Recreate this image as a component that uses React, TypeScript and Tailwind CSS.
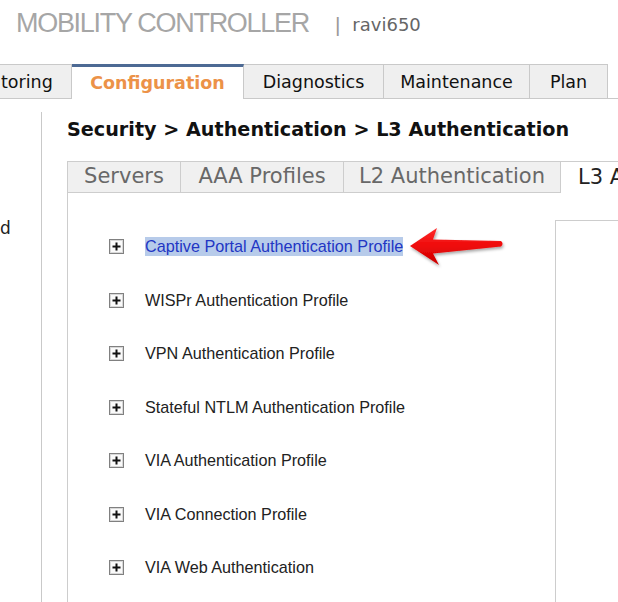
import React from "react";

function PlusIcon() {
  return (
    <svg width="15" height="15" viewBox="0 0 15 15" className="shrink-0">
      <rect x="0.5" y="0.5" width="14" height="14" fill="#f4f4f4" stroke="#808080" />
      <rect x="1.5" y="1.5" width="12" height="12" fill="#fafafa" stroke="#d8d8d8" />
      <rect x="3.5" y="6.5" width="8" height="2" fill="#111" />
      <rect x="6.5" y="3.5" width="2" height="8" fill="#111" />
    </svg>
  );
}

function Arrow() {
  return (
    <svg
      width="110"
      height="48"
      viewBox="0 0 110 48"
      className="absolute left-[403px] top-[223px]"
    >
      <defs>
        <linearGradient id="ag" x1="0" y1="0" x2="0" y2="1">
          <stop offset="0" stopColor="#ff2a2a" />
          <stop offset="0.5" stopColor="#ee0a0a" />
          <stop offset="1" stopColor="#c80000" />
        </linearGradient>
        <filter id="sh" x="-10%" y="-20%" width="130%" height="150%">
          <feDropShadow dx="1" dy="2" stdDeviation="1.4" floodColor="#000" floodOpacity="0.35" />
        </filter>
      </defs>
      <path
        d="M7 23 L34 5 L30 16.5 L98 18 Q101 20.5 98 23.5 L30 30.5 L36 42 Z"
        fill="url(#ag)"
        filter="url(#sh)"
      />
    </svg>
  );
}

const items = [
  "Captive Portal Authentication Profile",
  "WISPr Authentication Profile",
  "VPN Authentication Profile",
  "Stateful NTLM Authentication Profile",
  "VIA Authentication Profile",
  "VIA Connection Profile",
  "VIA Web Authentication",
];

export default function App() {
  return (
    <div className="relative w-[618px] h-[602px] overflow-hidden bg-white font-['DejaVu_Sans',sans-serif]">
      {/* Header */}
      <div className="h-[64px] flex items-start pl-[16px] pt-[10px]">
        <span className="font-['Liberation_Sans',sans-serif] text-[27px] leading-none tracking-[-1.3px] text-[#a6a6a6]">
          MOBILITY CONTROLLER
        </span>
        <span className="ml-[26px] mt-[4px] font-['Liberation_Sans',sans-serif] text-[21px] leading-none text-[#9a9a9a]">
          |
        </span>
        <span className="ml-[12px] mt-[6px] text-[18px] leading-none text-[#666]">ravi650</span>
      </div>

      {/* Top tabs */}
      <div className="flex h-[35px] overflow-hidden">
        <div className="ml-[-60px] w-[132px] shrink-0 flex items-center justify-center pt-[1px] bg-[#efefef] border border-[#c9c9c9] text-[17.5px] text-[#111]">
          Monitoring
        </div>
        <div className="w-[172px] shrink-0 flex items-center justify-center bg-white border-t-[3px] border-t-[#4d6a94] border-r border-r-[#c9c9c9] text-[17.5px] font-bold text-[#ec9248]">
          Configuration
        </div>
        <div className="w-[140px] shrink-0 flex items-center justify-center pt-[1px] bg-[#efefef] border-t border-b border-r border-[#c9c9c9] text-[17.5px] text-[#111]">
          Diagnostics
        </div>
        <div className="w-[146px] shrink-0 flex items-center justify-center pt-[1px] bg-[#efefef] border-t border-b border-r border-[#c9c9c9] text-[17.5px] text-[#111]">
          Maintenance
        </div>
        <div className="w-[78px] shrink-0 flex items-center justify-center pt-[1px] bg-[#efefef] border-t border-b border-r border-[#c9c9c9] text-[17.5px] text-[#111]">
          Plan
        </div>
        <div className="flex-1 border-b border-[#c9c9c9]" />
      </div>

      {/* Body */}
      <div className="flex h-[503px]">
        <div className="w-[42px] shrink-0 mt-[13px] border-r border-[#c9c9c9] pt-[108px] overflow-hidden">
          <div className="text-[17px] leading-none text-[#222]">d</div>
        </div>
        <div className="flex-1 flex flex-col pl-[25px] pt-[21px] min-w-0">
          <div className="h-[20px] text-[19.2px] leading-none font-bold text-[#111] whitespace-nowrap">
            Security &gt; Authentication &gt; L3 Authentication
          </div>
          {/* Sub tabs */}
          <div className="mt-[21px] flex h-[32px] shrink-0">
            <div className="w-[114px] shrink-0 flex items-center justify-center bg-[#f0f0f0] border border-[#cdcdcd] text-[21px] text-[#686868]">
              Servers
            </div>
            <div className="w-[163px] shrink-0 flex items-center justify-center bg-[#f0f0f0] border-t border-b border-r border-[#cdcdcd] text-[21px] text-[#686868]">
              AAA Profiles
            </div>
            <div className="w-[217px] shrink-0 flex items-center justify-center bg-[#f0f0f0] border-t border-b border-r border-[#cdcdcd] text-[21px] text-[#686868] whitespace-nowrap">
              L2 Authentication
            </div>
            <div className="w-[220px] shrink-0 flex items-center pl-[17px] bg-white border-t border-[#cdcdcd] text-[21px] text-[#222] whitespace-nowrap">
              L3 Authentication
            </div>
          </div>
          {/* Content panel */}
          <div className="flex-1 flex border-l border-[#cdcdcd]">
            <div className="w-[487px] shrink-0 pt-[27px] pl-[41px]">
              {items.map((t, i) => (
                <div key={t} className="h-[53.5px] flex items-center">
                  <PlusIcon />
                  <span
                    className={
                      "ml-[21px] font-['Liberation_Sans',sans-serif] text-[16.2px] leading-[19px] whitespace-nowrap " +
                      (i === 0 ? "bg-[#b7cbea] text-[#2236c4]" : "text-[#222]")
                    }
                  >
                    {t}
                  </span>
                </div>
              ))}
            </div>
            <div className="flex-1 mt-[27px] border-l border-t border-[#cdcdcd]" />
          </div>
        </div>
      </div>

      <Arrow />
    </div>
  );
}
